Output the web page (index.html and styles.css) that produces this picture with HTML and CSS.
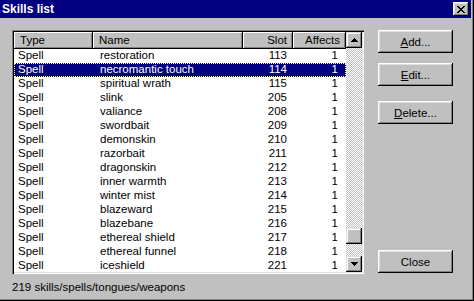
FILE: index.html
```html
<!DOCTYPE html>
<html lang="en">
<head>
    <meta charset="UTF-8">
    <title>Skills list</title>
    <link rel="stylesheet" href="styles.css">
</head>
<body>
    <div class="window">
        <div class="titlebar">
            <span class="title">Skills list</span>
            <button class="title-close">
                <svg width="8" height="7" viewBox="0 0 8 7" shape-rendering="crispEdges">
                    <path d="M0 0h2v1h-2zM6 0h2v1h-2zM1 1h2v1h-2zM5 1h2v1h-2zM2 2h4v1h-4zM3 3h2v1h-2zM2 4h4v1h-4zM1 5h2v1h-2zM5 5h2v1h-2zM0 6h2v1h-2zM6 6h2v1h-2z" fill="#000"/>
                </svg>
            </button>
        </div>
        <div class="content">
            <div class="listview">
                <div class="list-main">
                    <div class="list-header">
                        <div class="col-head">Type</div>
                        <div class="col-head">Name</div>
                        <div class="col-head right">Slot</div>
                        <div class="col-head right">Affects</div>
                    </div>
                    <div class="list-rows" id="rows"></div>
                </div>
                <div class="scrollbar">
                    <div class="scroll-btn">
                        <svg width="7" height="4" viewBox="0 0 7 4" shape-rendering="crispEdges"><path d="M3 0h1v1h-1zM2 1h3v1h-3zM1 2h5v1h-5zM0 3h7v1h-7z" fill="#000"/></svg>
                    </div>
                    <div class="scroll-track">
                        <div class="scroll-thumb"></div>
                    </div>
                    <div class="scroll-btn">
                        <svg width="7" height="4" viewBox="0 0 7 4" shape-rendering="crispEdges"><path d="M0 0h7v1h-7zM1 1h5v1h-5zM2 2h3v1h-3zM3 3h1v1h-1z" fill="#000"/></svg>
                    </div>
                </div>
            </div>
            <div class="buttons">
                <button class="btn btn-add"><u>A</u>dd...</button>
                <button class="btn btn-edit"><u>E</u>dit...</button>
                <button class="btn btn-delete"><u>D</u>elete...</button>
                <button class="btn btn-close">Close</button>
            </div>
        </div>
        <div class="status">219 skills/spells/tongues/weapons</div>
    </div>

    <script>
        const skills = [
            ["Spell", "restoration", 113, 1],
            ["Spell", "necromantic touch", 114, 1],
            ["Spell", "spiritual wrath", 115, 1],
            ["Spell", "slink", 205, 1],
            ["Spell", "valiance", 208, 1],
            ["Spell", "swordbait", 209, 1],
            ["Spell", "demonskin", 210, 1],
            ["Spell", "razorbait", 211, 1],
            ["Spell", "dragonskin", 212, 1],
            ["Spell", "inner warmth", 213, 1],
            ["Spell", "winter mist", 214, 1],
            ["Spell", "blazeward", 215, 1],
            ["Spell", "blazebane", 216, 1],
            ["Spell", "ethereal shield", 217, 1],
            ["Spell", "ethereal funnel", 218, 1],
            ["Spell", "iceshield", 221, 1]
        ];

        const rows = document.getElementById("rows");
        skills.forEach((skill, i) => {
            const row = document.createElement("div");
            row.classList.add("list-row");
            if (i === 1) row.classList.add("selected");
            skill.forEach((value, c) => {
                const cell = document.createElement("div");
                cell.classList.add("cell", "cell-" + c);
                cell.textContent = value;
                row.appendChild(cell);
            });
            rows.appendChild(row);
        });
    </script>
</body>
</html>
```

FILE: styles.css
```css
body {
    margin: 0;
    font-family: "Liberation Sans", Arial, sans-serif;
    font-size: 11.5px;
    background: #c0c0c0;
}

.window {
    width: 474px;
    height: 301px;
    box-sizing: border-box;
    padding: 0 3px 3px 0;
    background: #c0c0c0;
    box-shadow: inset -1px -1px #000, inset -2px -2px #808080;
    overflow: hidden;
}

.titlebar {
    height: 18px;
    background: #000080;
    display: flex;
    align-items: center;
    justify-content: space-between;
    padding: 0 2px 0 2px;
}

.title {
    color: #fff;
    font-weight: bold;
    font-size: 12px;
}

.title-close {
    width: 16px;
    height: 14px;
    padding: 0;
    border: none;
    background: #c0c0c0;
    display: flex;
    align-items: center;
    justify-content: center;
    box-shadow: inset -1px -1px #000, inset 1px 1px #fff, inset -2px -2px #808080, inset 2px 2px #dfdfdf;
}

.content {
    display: flex;
    padding: 12px 0 0 12px;
}

.listview {
    width: 352px;
    height: 244px;
    box-sizing: border-box;
    padding: 2px;
    background: #fff;
    display: flex;
    box-shadow: inset 1px 1px #808080, inset 2px 2px #000, inset -1px -1px #fff, inset -2px -2px #dfdfdf;
}

.list-main {
    width: 332px;
    display: flex;
    flex-direction: column;
}

.list-header,
.list-row {
    display: grid;
    grid-template-columns: 79px 150px 50px 53px;
}

.col-head {
    height: 17px;
    line-height: 17px;
    padding: 0 6px;
    background: #c0c0c0;
    box-shadow: inset -1px -1px #000, inset 1px 1px #fff, inset -2px -2px #808080;
    white-space: nowrap;
    overflow: hidden;
}

.right {
    text-align: right;
}

.list-rows {
    height: 223px;
    overflow: hidden;
}

.list-row {
    height: 14px;
    line-height: 13px;
    box-sizing: border-box;
}

.list-row.selected {
    background: #000080;
    color: #fff;
    outline: 1px dotted #ffff80;
    outline-offset: -1px;
}

.cell {
    white-space: nowrap;
    overflow: hidden;
}

.cell-0 {
    padding-left: 4px;
}

.cell-1 {
    padding-left: 7px;
}

.cell-2,
.cell-3 {
    text-align: right;
    padding-right: 6px;
}

.cell-3 {
    padding-right: 8px;
}

.scrollbar {
    width: 16px;
    display: flex;
    flex-direction: column;
}

.scroll-btn {
    height: 16px;
    background: #c0c0c0;
    display: flex;
    align-items: center;
    justify-content: center;
    box-shadow: inset -1px -1px #000, inset 1px 1px #dfdfdf, inset -2px -2px #808080, inset 2px 2px #fff;
}

.scroll-track {
    flex: 1;
    display: flex;
    flex-direction: column;
    background: repeating-conic-gradient(#c0c0c0 0 25%, #fff 0 50%) 0 0 / 2px 2px;
}

.scroll-thumb {
    margin-top: 180px;
    height: 16px;
    background: #c0c0c0;
    box-shadow: inset -1px -1px #000, inset 1px 1px #dfdfdf, inset -2px -2px #808080, inset 2px 2px #fff;
}

.buttons {
    display: flex;
    flex-direction: column;
    margin-left: 14px;
}

.btn {
    width: 75px;
    height: 23px;
    padding: 0;
    border: none;
    background: #c0c0c0;
    font-family: "Liberation Sans", Arial, sans-serif;
    font-size: 11.5px;
    color: #000;
    box-shadow: inset -1px -1px #000, inset 1px 1px #fff, inset -2px -2px #808080, inset 2px 2px #dfdfdf;
}

.btn-edit {
    margin-top: 10px;
}

.btn-delete {
    margin-top: 15px;
}

.btn-close {
    margin-top: 126px;
}

.status {
    margin: 7px 0 0 12px;
    line-height: 13px;
}
```
